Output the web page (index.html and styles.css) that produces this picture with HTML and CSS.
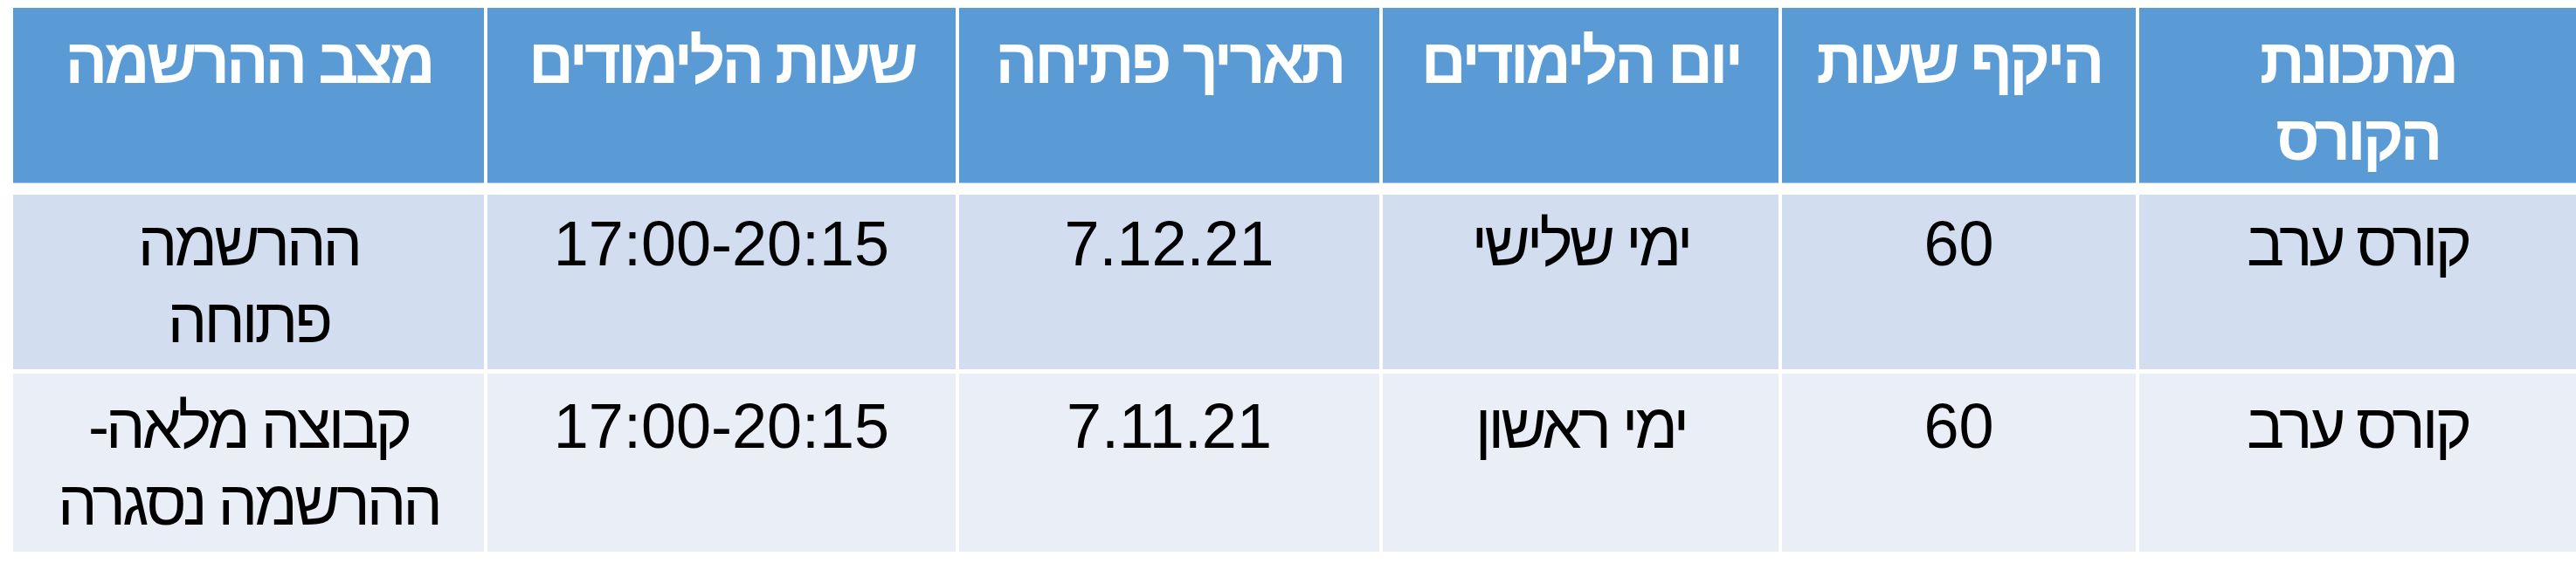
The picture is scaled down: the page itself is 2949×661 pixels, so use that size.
FILE: index.html
```html
<!DOCTYPE html>
<html lang="he" dir="rtl">
<head>
<meta charset="utf-8">
<title>מתכונת הקורס</title>
<link rel="stylesheet" href="styles.css">
</head>
<body>
<div class="table">
  <div class="row head">
    <div class="cell he">מתכונת<br>הקורס</div>
    <div class="cell he">היקף שעות</div>
    <div class="cell he">יום הלימודים</div>
    <div class="cell he">תאריך פתיחה</div>
    <div class="cell he">שעות הלימודים</div>
    <div class="cell he">מצב ההרשמה</div>
  </div>
  <div class="row odd">
    <div class="cell he">קורס ערב</div>
    <div class="cell">60</div>
    <div class="cell he">ימי שלישי</div>
    <div class="cell">7.12.21</div>
    <div class="cell">17:00-20:15</div>
    <div class="cell he">ההרשמה<br>פתוחה</div>
  </div>
  <div class="row even">
    <div class="cell he">קורס ערב</div>
    <div class="cell">60</div>
    <div class="cell he">ימי ראשון</div>
    <div class="cell">7.11.21</div>
    <div class="cell">17:00-20:15</div>
    <div class="cell he">קבוצה מלאה-<br>ההרשמה נסגרה</div>
  </div>
</div>
</body>
</html>
```

FILE: styles.css
```css
html, body {
  margin: 0;
  padding: 0;
  background: #ffffff;
}

body {
  font-family: "Liberation Sans", Arial, sans-serif;
  direction: rtl;
}

.table {
  width: 2934px;
  margin: 9px 0 0 4px;
  display: flex;
  flex-direction: column;
}

.row {
  display: grid;
  grid-template-columns: 500px 405px 453px 481px 536px 539px;
  column-gap: 4px;
}

.cell {
  box-sizing: border-box;
  text-align: center;
  font-size: 72px;
  line-height: 88px;
  color: #000000;
}

.he {
  letter-spacing: -4px;
}

.head {
  height: 201px;
  margin-bottom: 13px;
}

.head .cell {
  background: #5b9bd5;
  border-bottom: 1px solid #a6c8ec;
  color: #ffffff;
  font-weight: bold;
  padding-top: 17px;
}

.odd {
  height: 200px;
  margin-bottom: 5px;
}

.odd .cell {
  background: #d2deef;
  padding-top: 12px;
}

.even {
  height: 204px;
}

.even .cell {
  background: #eaeff7;
  padding-top: 16px;
}
```
